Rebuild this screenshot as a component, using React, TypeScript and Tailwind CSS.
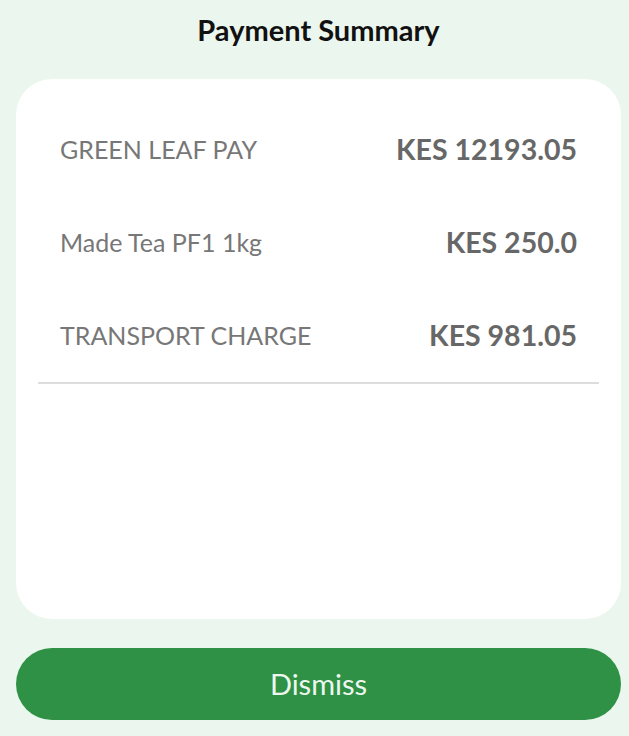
const rows = [
  { label: "GREEN LEAF PAY", amount: "KES 12193.05" },
  { label: "Made Tea PF1 1kg", amount: "KES 250.0" },
  { label: "TRANSPORT CHARGE", amount: "KES 981.05" },
];

export default function App() {
  return (
    <div className="min-h-[736px] bg-[#ebf6ee] pl-4 pr-2 font-['Lato',sans-serif] flex flex-col">
      {/* Header */}
      <div className="h-[79px] pt-[12px] text-center">
        <h1 className="text-[29px] leading-[36px] font-bold text-[#111111]">Payment Summary</h1>
      </div>

      {/* Summary card */}
      <div className="h-[540px] bg-white rounded-[36px] pt-[24px] px-[22px]">
        {rows.map((row) => (
          <div key={row.label} className="h-[93px] flex items-center justify-between px-[22px]">
            <span className="text-[25px] text-[#777777]">{row.label}</span>
            <span className="text-[28.5px] font-bold text-[#676767]">{row.amount}</span>
          </div>
        ))}
        <div className="h-[2px] bg-[#dddddd]" />
      </div>

      {/* Dismiss */}
      <button className="mt-[29px] h-[72px] w-full rounded-full bg-[#2e9145] text-[29px] text-[#eef7ef]">
        Dismiss
      </button>
    </div>
  );
}
